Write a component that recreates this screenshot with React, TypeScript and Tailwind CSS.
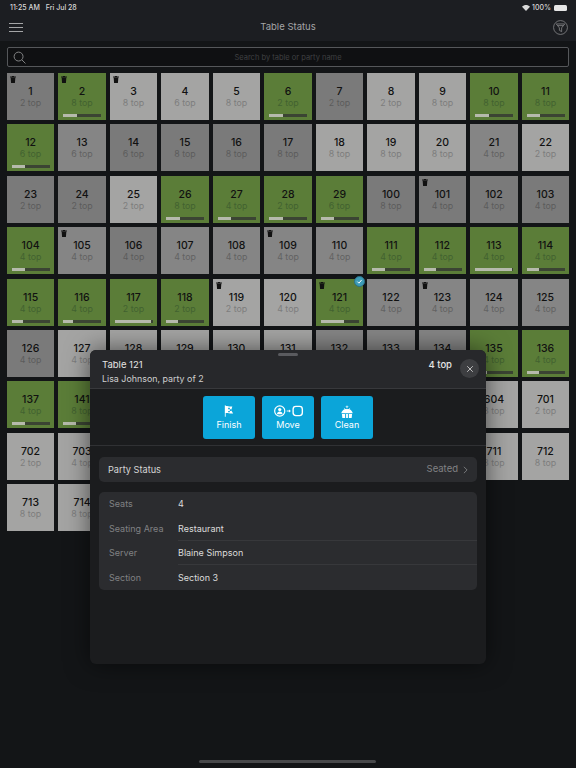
import React from "react";

type Tone = "l" | "m" | "d" | "g";
type T = { n: string; s: number; c: Tone; bar?: number; trash?: boolean; check?: boolean; covered?: boolean; noSub?: boolean };
const t = (n: number | string, s: number, c: Tone, bar?: number, trash?: boolean, check?: boolean): T => ({ n: String(n), s, c, bar, trash, check });
const under = (n: string): T => ({ n, s: 0, c: "l", covered: true });
const cut = (n: number, c: Tone): T => ({ n: String(n), s: 4, c, noSub: true });

const tiles: T[] = [
  t(1, 2, "d", undefined, true), t(2, 8, "g", 35, true), t(3, 8, "l", undefined, true), t(4, 6, "l"), t(5, 8, "l"), t(6, 2, "g", 35), t(7, 2, "d"), t(8, 2, "l"), t(9, 8, "l"), t(10, 8, "g", 35), t(11, 8, "g", 35),
  t(12, 6, "g", 35), t(13, 6, "m"), t(14, 6, "d"), t(15, 8, "d"), t(16, 8, "d"), t(17, 8, "d"), t(18, 8, "l"), t(19, 8, "l"), t(20, 8, "l"), t(21, 4, "m"), t(22, 2, "l"),
  t(23, 2, "d"), t(24, 2, "d"), t(25, 2, "l"), t(26, 8, "g", 35), t(27, 4, "g", 35), t(28, 2, "g", 35), t(29, 6, "g", 35), t(100, 8, "d"), t(101, 4, "d", undefined, true), t(102, 4, "d"), t(103, 4, "d"),
  t(104, 4, "g", 35), t(105, 4, "m", undefined, true), t(106, 4, "d"), t(107, 4, "m"), t(108, 4, "m"), t(109, 4, "m", undefined, true), t(110, 4, "m"), t(111, 4, "g", 33), t(112, 4, "g", 33), t(113, 4, "g", 96), t(114, 4, "g", 33),
  t(115, 4, "g", 30), t(116, 4, "g", 25), t(117, 2, "g", 95), t(118, 2, "g", 30), t(119, 2, "l", undefined, true), t(120, 4, "l"), t(121, 4, "g", 60, true, true), t(122, 4, "m"), t(123, 4, "m", undefined, true), t(124, 4, "m"), t(125, 4, "m"),
  t(126, 4, "d"), t(127, 4, "l"), cut(128, "l"), cut(129, "l"), cut(130, "l"), cut(131, "l"), cut(132, "m"), cut(133, "m"), cut(134, "m"), t(135, 4, "g", 30), t(136, 4, "g", 33),
  t(137, 4, "g", 33), t(141, 8, "g", 33), under("a1"), under("a2"), under("a3"), under("a4"), under("a5"), under("a6"), under("a7"), t(604, 8, "l"), t(701, 2, "l"),
  t(702, 2, "l"), t(703, 4, "l"), under("b1"), under("b2"), under("b3"), under("b4"), under("b5"), under("b6"), under("b7"), t(711, 8, "l"), t(712, 8, "l"),
  t(713, 8, "l"), t(714, 8, "l"),
];

const toneClass: Record<Tone, string> = {
  l: "bg-[#a4a4a3]",
  m: "bg-[#858585]",
  d: "bg-[#7a7a7a]",
  g: "bg-[#5b7d38]",
};
const subClass: Record<Tone, string> = {
  l: "text-[#7d7d7d]",
  m: "text-[#626262]",
  d: "text-[#5c5c5c]",
  g: "text-[#426230]",
};

function Trash() {
  return (
    <svg viewBox="0 0 10 12" className="absolute left-[3px] top-[3px] h-[7px] w-[6px] fill-[#111]">
      <path d="M3.500 0h3l.6 1H10v1.400H0V1h2.900zM1 3.200h8L8.300 12H1.700z" />
    </svg>
  );
}

function Tile({ d }: { d: T }) {
  return (
    <div className={`relative flex h-[47px] flex-col items-center pt-[13px] ${toneClass[d.c]}`}>
      {d.trash && <Trash />}
      {!d.covered && <div className="text-[10.5px] font-medium leading-[12px] text-[#111]">{d.n}</div>}
      {!d.covered && !d.noSub && <div className={`text-[8.8px] leading-[10px] ${subClass[d.c]}`}>{d.s} top</div>}
      {d.bar !== undefined && (
        <div className="absolute bottom-[3px] left-[5px] flex h-[3px] w-[38px] bg-[#3b4433]">
          <div className="h-full bg-[#b6baac]" style={{ width: `${d.bar}%` }} />
        </div>
      )}
      {d.check && (
        <div className="absolute right-[-2px] top-[-3px] flex h-[11px] w-[11px] items-center justify-center rounded-full border border-[#2c6f85] bg-[#3c9cb8]">
          <svg viewBox="0 0 10 10" className="h-[7px] w-[7px] fill-none stroke-white stroke-[1.4]">
            <path d="M2 5.200 4.200 7.400 8 2.800" />
          </svg>
        </div>
      )}
    </div>
  );
}

function ActionButton({ label, children }: { label: string; children: React.ReactNode }) {
  return (
    <div className="flex h-[43px] w-[52px] flex-col items-center rounded-[3px] bg-[#0ba5d9] pt-[8px] text-white">
      <div className="flex h-[15px] items-center justify-center">{children}</div>
      <div className="text-[9px] leading-[12px]">{label}</div>
    </div>
  );
}

function Row({ label, value, line }: { label: string; value: string; line?: boolean }) {
  return (
    <div className="relative flex h-[24.4px] items-center pl-[10px]">
      <div className="w-[69px] text-[9px] text-[#808183]">{label}</div>
      <div className="text-[9px] text-[#dcdcdc]">{value}</div>
      {line && <div className="absolute bottom-0 left-[79px] right-0 h-px bg-[#37383b]" />}
    </div>
  );
}

export default function App() {
  return (
    <div className="relative h-[768px] w-[576px] overflow-hidden bg-[#131517] font-['Inter',sans-serif]">
      <header className="h-[41px] bg-[#1c1e22]">
        <div className="flex h-[14px] items-center justify-between pl-[10px] pr-[9px] pt-[2px] text-[7px] font-medium text-[#d8d8d8]">
          <div className="flex gap-[6px]">
            <span>11:25 AM</span>
            <span>Fri Jul 28</span>
          </div>
          <div className="flex items-center gap-[2px]">
            <svg viewBox="0 0 16 12" className="h-[6px] w-[8px] fill-[#d8d8d8]">
              <path d="M8 12 0 3.500C4.500-1 11.500-1 16 3.500z" />
            </svg>
            <span>100%</span>
            <div className="ml-[1px] h-[6px] w-[13px] rounded-[1.5px] bg-[#e6e6e6]" />
          </div>
        </div>
        <div className="relative flex h-[27px] items-center justify-center">
          <span className="text-[9.5px] text-[#a4a5a7]">Table Status</span>
          <div className="absolute left-[9px] top-[9px] flex w-[14px] flex-col gap-[3px]">
            <div className="h-px bg-[#a4a5a7]" />
            <div className="h-px bg-[#a4a5a7]" />
            <div className="h-px bg-[#a4a5a7]" />
          </div>
          <svg viewBox="0 0 16 16" className="absolute right-[8px] top-[6px] h-[15px] w-[15px] fill-none stroke-[#8d8e90] stroke-[0.8]">
            <circle cx="8" cy="8" r="7.400" />
            <path d="M3.500 4.200h9L9.200 8.400v4L6.800 11V8.400z" />
            <path d="M5.200 6h5.600" />
          </svg>
        </div>
      </header>

      <div className="px-[7px] pt-[6px]">
        <div className="flex h-[20px] items-center rounded-[2px] border border-[#55575a] bg-[#0f1012]">
          <svg viewBox="0 0 14 14" className="ml-[5px] h-[13px] w-[13px] fill-none stroke-[#8a8b8d] stroke-[1]">
            <circle cx="6" cy="6" r="4.800" />
            <path d="M9.600 9.600 13.400 13.400" />
          </svg>
          <div className="flex-1 pr-[18px] pt-[1px] text-center text-[7.5px] text-[#3f4042]">Search by table or party name</div>
        </div>
        <div className="mt-[6px] grid grid-cols-11 gap-x-[4.4px] gap-y-[4.4px]">
          {tiles.map((d) => (
            <Tile key={d.n} d={d} />
          ))}
        </div>
      </div>

      <div className="absolute left-[90px] top-[350px] flex h-[314px] w-[396px] flex-col rounded-[6px] bg-[#1b1c1e] shadow-[0_0_24px_rgba(0,0,0,0.55)]">
        <div className="absolute left-[188px] top-[3px] h-[3px] w-[20px] rounded-full bg-[#5a5b5f]" />
        <div className="flex h-[39px] rounded-t-[6px] border-b border-[#38393c] bg-[#27282b] pl-[12px] pr-[7px] pt-[9px]">
          <div className="flex-1">
            <div className="text-[9.5px] leading-[12px] text-[#e4e4e4]">Table 121</div>
            <div className="mt-[2px] text-[8.9px] leading-[12px] text-[#cfcfcf]">Lisa Johnson, party of 2</div>
          </div>
          <div className="pr-[8px] text-[9.5px] font-medium leading-[12px] text-[#e4e4e4]">4 top</div>
          <div className="flex h-[19px] w-[19px] items-center justify-center rounded-full bg-[#3d3e41]">
            <svg viewBox="0 0 10 10" className="h-[8px] w-[8px] fill-none stroke-[#c2c2c2] stroke-[1.2]">
              <path d="M1.500 1.500 8.500 8.500M8.500 1.500 1.500 8.500" />
            </svg>
          </div>
        </div>
        <div className="flex h-[57px] items-center justify-center gap-[7px] border-b border-[#303134]">
          <ActionButton label="Finish">
            <svg viewBox="0 0 12 14" className="h-[12px] w-[10px] fill-white">
              <path d="M1 0h1v1c3 0 4 1 8 .6L8.600 6 11 10c-4 .6-6-1-9-.6V14H1z" />
              <path d="M5 3h2v2H5zM7 5h2v2H7zM5 7h2v1.600H5z" className="fill-[#0ba5d9]" />
            </svg>
          </ActionButton>
          <ActionButton label="Move">
            <svg viewBox="0 0 32 13" className="h-[12px] w-[31px]">
              <circle cx="6.500" cy="6.500" r="5.500" fill="none" stroke="white" strokeWidth="1.300" />
              <circle cx="6.500" cy="5" r="1.800" fill="white" />
              <path d="M3.500 10c0-2 1.400-3 3-3s3 1 3 3z" fill="white" />
              <path d="M14 6.500h3" stroke="white" strokeWidth="1" />
              <path d="M16.500 4.900 18.600 6.500 16.500 8.100z" fill="white" />
              <rect x="21" y="1.500" width="10" height="10" rx="3" fill="none" stroke="white" strokeWidth="1.500" />
            </svg>
          </ActionButton>
          <ActionButton label="Clean">
            <svg viewBox="0 0 14 14" className="h-[13px] w-[14px] fill-white">
              <path d="M7 0l.5 1.500L9 2l-1.500.5L7 4l-.5-1.500L5 2l1.500-.5z" />
              <path d="M3.500 3l2.500 2-1 1.200zM10.500 3 8 5l1 1.200z" />
              <path d="M1 8c1-2.400 3-3.600 6-3.600S12 5.600 13 8v1H1z" />
              <path d="M1.500 9.800h3.500V14H2zM9 9.800h3.500L12 14H9zM6 9.800h2V14H6z" />
            </svg>
          </ActionButton>
        </div>
        <div className="mx-[9px] mt-[11px] flex h-[25px] items-center justify-between rounded-[5px] bg-[#2b2c2f] px-[9px]">
          <span className="text-[9.2px] text-[#d6d6d6]">Party Status</span>
          <span className="flex items-center gap-[5px] text-[9.5px] text-[#818284]">
            Seated
            <svg viewBox="0 0 6 10" className="h-[8px] w-[5px] fill-none stroke-[#818284] stroke-[1.1]">
              <path d="M1 1l4 4-4 4" />
            </svg>
          </span>
        </div>
        <div className="mx-[9px] mt-[10px] rounded-[5px] bg-[#2b2c2f]">
          <Row label="Seats" value="4" />
          <Row label="Seating Area" value="Restaurant" line />
          <Row label="Server" value="Blaine Simpson" line />
          <Row label="Section" value="Section 3" />
        </div>
      </div>

      <div className="absolute bottom-[5px] left-[199px] h-[3px] w-[177px] rounded-full bg-[#48494b]" />
    </div>
  );
}
